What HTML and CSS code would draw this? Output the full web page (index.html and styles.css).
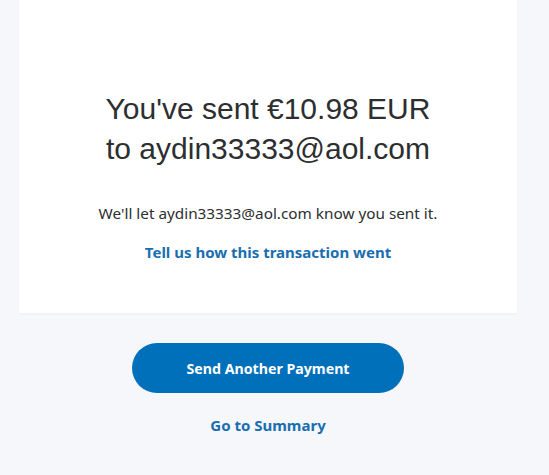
FILE: index.html
```html
<!DOCTYPE html>
<html>
<head>
<meta charset="utf-8">
<link rel="stylesheet" href="styles.css">
</head>
<body>
<main class="column">
  <section class="card">
    <h1 class="title">You've sent €10.98 EUR<br>to aydin33333@aol.com</h1>
    <p class="note">We'll let aydin33333@aol.com know you sent it.</p>
    <a class="link" href="#">Tell us how this transaction went</a>
  </section>
  <div class="actions">
    <a class="btn" href="#">Send Another Payment</a>
    <a class="link summary" href="#">Go to Summary</a>
  </div>
</main>
</body>
</html>
```
FILE: styles.css
```css
html, body {
  margin: 0;
  padding: 0;
  background: #f5f7fa;
}
body {
  font-family: "Noto Sans", "Liberation Sans", sans-serif;
  color: #2c2e2f;
}
.column {
  width: 498px;
  margin-left: 19px;
  display: flex;
  flex-direction: column;
  align-items: center;
}
.card {
  box-sizing: border-box;
  width: 100%;
  height: 313px;
  background: #ffffff;
  box-shadow: 0 1px 2px rgba(0,0,0,0.04);
  display: flex;
  flex-direction: column;
  align-items: center;
  padding-top: 89px;
}
.title {
  margin: 0;
  font-family: "Liberation Sans", Arial, sans-serif;
  font-weight: normal;
  font-size: 30px;
  line-height: 40px;
  text-align: center;
  color: #2c2e2f;
}
.note {
  margin: 34px 0 0;
  font-size: 15.3px;
  line-height: 20px;
  color: #2c2e2f;
}
.link {
  color: #1a6eb0;
  font-weight: 700;
  text-decoration: none;
  font-size: 15px;
  line-height: 20px;
}
.card .link {
  margin-top: 19px;
}
.actions {
  display: flex;
  flex-direction: column;
  align-items: center;
  padding-top: 30px;
}
.btn {
  width: 272px;
  height: 50px;
  border-radius: 25px;
  background: #0070ba;
  color: #fff;
  font-weight: 700;
  font-size: 14.2px;
  text-decoration: none;
  display: flex;
  align-items: center;
  justify-content: center;
}
.summary {
  margin-top: 22px;
}
```
